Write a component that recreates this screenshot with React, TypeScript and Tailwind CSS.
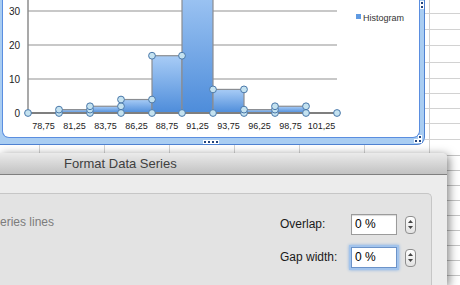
import React from "react";

const xs = [28, 59, 90, 121, 152, 182, 213, 244, 275, 306, 337];
const values = [0, 1, 2, 4, 17, 40, 7, 1, 2, 0];
const labels = ["78,75", "81,25", "83,75", "86,25", "88,75", "91,25", "93,75", "96,25", "98,75", "101,25"];
const yOf = (v: number) => 113 - 3.37 * v;

const topRows = ["h-[14px] border-b", "h-[16px] border-b", "h-[16px] border-b", "h-[17px] border-b", "h-[16px] border-b", "h-[15px] border-b", "h-[15px] border-b", "h-[15px] border-b", "h-[16px] border-b", "flex-1"];
const stripCols = ["w-[40px] border-r", "w-[65px] border-r", "w-[65px] border-r", "w-[65px] border-r", "w-[65px] border-r", "w-[65px] border-r", "w-[65px] border-r", "flex-1"];
const sideRows = ["h-[3px] border-b", "h-[15px] border-b", "h-[15px] border-b", "h-[15px] border-b", "h-[15px] border-b", "h-[15px] border-b", "h-[15px] border-b", "h-[15px] border-b", "h-[15px] border-b", "flex-1"];

function Chart() {
  const dots: [number, number][] = [];
  xs.forEach((x, i) => {
    const ys = new Set<number>([113]);
    if (i > 0) ys.add(yOf(values[i - 1]));
    if (i < values.length) ys.add(yOf(values[i]));
    ys.forEach((y) => {
      if (y > 0) dots.push([x, y]);
    });
  });

  return (
    <svg width="416" height="137" className="block">
      <defs>
        <linearGradient id="bar" x1="0" y1="0" x2="0" y2="1">
          <stop offset="0" stopColor="#a8ccf6" />
          <stop offset="1" stopColor="#4d8cda" />
        </linearGradient>
      </defs>
      <g transform="translate(-3 0)">
        {/* gridlines */}
        {[11, 45, 79].map((y) => (
          <line key={y} x1="28" x2="337" y1={y} y2={y} stroke="#c8c8c8" strokeWidth="2" />
        ))}
        {/* bars */}
        {values.map((v, i) =>
          v > 0 ? (
            <rect
              key={i}
              x={xs[i]}
              y={yOf(v)}
              width={xs[i + 1] - xs[i]}
              height={113 - yOf(v)}
              fill="url(#bar)"
              stroke="#8a8d92"
              strokeWidth="1.2"
            />
          ) : null
        )}
        <line x1="28" x2="28" y1="0" y2="113" stroke="#8c8c8c" strokeWidth="1.5" />
        <line x1="28" x2="337" y1="113" y2="113" stroke="#7f7f7f" strokeWidth="2" />
        {dots.map(([x, y], i) => (
          <circle key={i} cx={x} cy={y} r="3.4" fill="#c4e2f0" stroke="#4a78aa" strokeWidth="1" />
        ))}
        {/* axis labels */}
        {[
          ["30", 11],
          ["20", 45],
          ["10", 79],
          ["0", 113],
        ].map(([t, y]) => (
          <text key={t} x="20" y={(y as number) + 3.5} textAnchor="end" fontSize="10" fill="#222">
            {t}
          </text>
        ))}
        {labels.map((t, i) => (
          <text key={t} x={(xs[i] + xs[i + 1]) / 2} y="129" textAnchor="middle" fontSize="9" fill="#222">
            {t}
          </text>
        ))}
        {/* legend */}
        <rect x="356" y="14" width="5" height="5" fill="#5f9ae2" />
        <text x="363" y="21" fontSize="9" fill="#333">
          Histogram
        </text>
      </g>
    </svg>
  );
}

function Stepper() {
  return (
    <div className="w-[11px] h-[18px] rounded-[4px] border border-[#8e8e8e] bg-gradient-to-b from-white to-[#e2e2e2] flex flex-col items-center justify-center gap-[3px]">
      <svg width="5" height="3">
        <path d="M2.5 0L5 3H0z" fill="#444" />
      </svg>
      <svg width="5" height="3">
        <path d="M0 0h5L2.5 3z" fill="#444" />
      </svg>
    </div>
  );
}

function Field({ label, focused }: { label: string; focused?: boolean }) {
  return (
    <div className="flex items-center h-[21px]">
      <div className="w-[71px] text-[12px] leading-[21px] text-[#1a1a1a]">{label}</div>
      <div
        className={
          focused
            ? "w-[46px] h-[21px] bg-white border border-[#6c93c9] shadow-[0_0_0_2px_#a3c4ec,0_0_3px_2px_#86b1e4] pl-[3px] text-[12px] leading-[19px] text-black"
            : "w-[46px] h-[21px] bg-white border border-[#9b9b9b] shadow-[inset_0_1px_1px_rgba(0,0,0,0.15)] pl-[3px] text-[12px] leading-[19px] text-black"
        }
      >
        0 %
      </div>
      <div className="ml-[8px]">
        <Stepper />
      </div>
    </div>
  );
}

export default function App() {
  return (
    <div className="w-[460px] h-[285px] overflow-hidden bg-white font-['Liberation_Sans',sans-serif] flex flex-col">
      {/* Chart object on the sheet */}
      <div className="flex h-[145px] shrink-0">
        <div className="relative w-[425px] h-[145px] shrink-0 bg-[#a9cdf2] border-r border-b border-[#4f82d2] rounded-br-[8px] pl-[2px] pr-[4px] pb-[6px] flex">
          <div className="flex-1 bg-white border-x border-b border-[#5a8ee0] rounded-b-[7px] overflow-hidden">
            <Chart />
          </div>
          {/* resize handles */}
          <svg className="absolute left-[420px] top-[1px]" width="4" height="8">
            <rect x="0" y="0" width="4" height="8" fill="#fff" />
            <rect x="1" y="1" width="2" height="2" fill="#23457f" />
            <rect x="1" y="5" width="2" height="2" fill="#23457f" />
          </svg>
          <svg className="absolute left-[203px] top-[140px]" width="16" height="4">
            {[0, 4, 8, 12].map((x) => (
              <g key={x}>
                <rect x={x} y="0" width="4" height="4" fill="#fff" />
                <rect x={x + 1} y="1" width="2" height="2" fill="#23457f" />
              </g>
            ))}
          </svg>
          <svg className="absolute left-[413px] top-[135px]" width="9" height="8">
            {[
              [5, 0],
              [1, 4],
              [5, 4],
            ].map(([x, y]) => (
              <g key={`${x}-${y}`}>
                <rect x={x} y={y} width="4" height="4" fill="#fff" />
                <rect x={x + 1} y={y + 1} width="2" height="2" fill="#23457f" />
              </g>
            ))}
          </svg>
        </div>
        <div className="flex-1 flex flex-col">
          {topRows.map((r, i) => (
            <div key={i} className={`${r} border-[#d2d2d2] flex`}>
              <div className="w-[5px] border-r border-[#d2d2d2]" />
            </div>
          ))}
        </div>
      </div>

      {/* cells between chart and dialog */}
      <div className="flex h-[8px] shrink-0">
        {stripCols.map((c, i) => (
          <div key={i} className={`${c} border-[#d2d2d2]`} />
        ))}
      </div>

      {/* Format Data Series dialog */}
      <div className="flex flex-1 min-h-0">
        <div className="relative z-10 w-[447px] shrink-0 bg-[#ececec] rounded-tr-[5px] shadow-[2px_2px_10px_rgba(0,0,0,0.5)] flex flex-col">
          <div className="h-[22px] shrink-0 rounded-tr-[5px] border-b border-[#7f7f7f] bg-gradient-to-b from-[#ebebeb] to-[#c2c2c2] pl-[64px] text-[13px] leading-[21px] text-[#404040]">
            Format Data Series
          </div>
          <div className="h-[18px] shrink-0" />
          <div className="flex-1 mr-[15px] bg-[#e3e3e3] border-t border-r border-[#c6c6c6] rounded-tr-[5px] flex justify-between">
            <div className="-ml-[8px] pt-[21px] text-[12px] leading-[14px] text-[#7c7c7c]">Series lines</div>
            <div className="pt-[20px] pr-[15px] flex flex-col gap-[12px]">
              <Field label="Overlap:" />
              <Field label="Gap width:" focused />
            </div>
          </div>
        </div>
        <div className="flex-1 flex flex-col">
          {sideRows.map((r, i) => (
            <div key={i} className={`${r} border-[#c4c4c4]`} />
          ))}
        </div>
      </div>
    </div>
  );
}
